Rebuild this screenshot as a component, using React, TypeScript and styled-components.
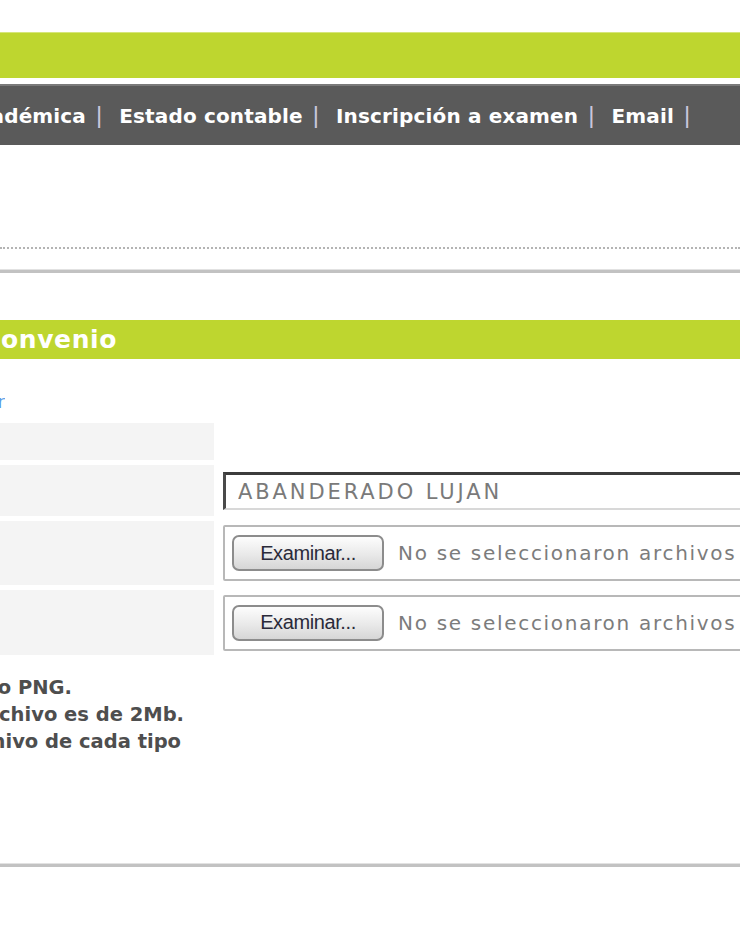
import React from 'react';
import styled, { createGlobalStyle } from 'styled-components';

const GlobalStyle = createGlobalStyle`
	html, body {
		margin: 0;
		padding: 0;
		background: #ffffff;
	}
	body {
		font-family: 'DejaVu Sans', Verdana, sans-serif;
		overflow: hidden;
	}
`;

const Page = styled.div`
	width: 740px;
	height: 940px;
	overflow: hidden;
	padding-top: 32px;
	box-sizing: border-box;
`;

const BrandBar = styled.div`
	height: 46px;
	background: #bed62f;
	border-top: 1px solid #d6e67a;
	box-sizing: border-box;
`;

const NavBar = styled.nav`
	margin-top: 6px;
	height: 61px;
	background: #5a5a5a;
	border-top: 2px solid #7a7a7a;
	box-sizing: border-box;
	display: flex;
	align-items: center;
	overflow: hidden;
	white-space: nowrap;
`;

// keeps only the right end of a text whose start lies left of the page
const Clip = styled.div<{ $w: number }>`
	width: ${(p) => p.$w}px;
	flex-shrink: 0;
	display: flex;
	justify-content: flex-end;
	overflow: hidden;
	white-space: nowrap;

	> span {
		flex-shrink: 0;
	}
`;

const NavLink = styled.a`
	color: #ffffff;
	font-weight: bold;
	font-size: 20px;
	letter-spacing: 0.15px;
	text-decoration: none;
	flex-shrink: 0;
`;

const Sep = styled.span`
	font-family: 'Liberation Sans', Arial, sans-serif;
	font-size: 24px;
	color: #c9c6dc;
	margin: 0 17px 2px 10px;
	flex-shrink: 0;
`;

const DottedRule = styled.div`
	margin-top: 102px;
	border-top: 2px dotted #b4b4b4;
`;

const SolidRule = styled.div<{ $top: number }>`
	margin-top: ${(p) => p.$top}px;
	height: 3px;
	background: #c2c2c2;
	border-top: 1px solid #e2e2e2;
`;

const SectionTitle = styled.h2`
	margin: 47px 0 0;
	height: 39px;
	background: #bed62f;
	display: flex;
	align-items: center;
	color: #ffffff;
	font-size: 25px;
	font-weight: bold;
	letter-spacing: 0.6px;
`;

const BackLine = styled.div`
	margin-top: 34px;
	height: 16px;
	display: flex;
	align-items: center;
`;

const BackLink = styled.a`
	color: #5b9be6;
	font-size: 18px;
	text-decoration: none;
`;

const FormGrid = styled.div`
	margin-top: 14px;
	display: grid;
	grid-template-columns: 214px 1fr;
	column-gap: 9px;
	row-gap: 5px;
`;

const Label = styled.div<{ $h: number }>`
	height: ${(p) => p.$h}px;
	background: #f4f4f4;
`;

const Value = styled.div`
	display: flex;
	align-items: center;
	overflow: hidden;
`;

const TextInput = styled.input`
	width: 560px;
	height: 38px;
	flex-shrink: 0;
	box-sizing: border-box;
	border-top: 3px solid #3c3c3c;
	border-left: 3px solid #4a4a4a;
	border-right: 2px solid #d0d0d0;
	border-bottom: 2px solid #d8d8d8;
	background: #ffffff;
	padding: 2px 0 0 12px;
	font-family: 'DejaVu Sans', Verdana, sans-serif;
	font-size: 21px;
	letter-spacing: 2.9px;
	color: #7a7a7a;
	outline: none;
`;

const FileBox = styled.div`
	width: 560px;
	height: 56px;
	flex-shrink: 0;
	box-sizing: border-box;
	border: 2px solid #b8b8b8;
	border-radius: 2px;
	display: flex;
	align-items: center;
	padding-left: 7px;
	gap: 14px;
`;

const BrowseButton = styled.button`
	width: 152px;
	height: 36px;
	flex-shrink: 0;
	border: 2px solid #8c8c8c;
	border-radius: 7px;
	background: linear-gradient(#fdfdfd, #e9e9e9 55%, #d6d6d6);
	font-family: 'Liberation Sans', Arial, sans-serif;
	font-size: 20px;
	letter-spacing: -0.4px;
	color: #2a2a3a;
	padding: 0;
`;

const FileStatus = styled.span`
	font-family: 'DejaVu Sans', Verdana, sans-serif;
	font-size: 20px;
	letter-spacing: 1.7px;
	color: #7c7c7c;
	white-space: nowrap;
`;

const Notes = styled.div`
	margin-top: 19px;
	color: #4e4e4e;
	font-size: 19.5px;
	font-weight: bold;
	line-height: 27px;
`;

const BottomRule = styled(SolidRule)``;

const navItems = ['Estado contable', 'Inscripción a examen', 'Email'];

const notes: [number, string][] = [
	[72, 'Los archivos deben ser de tipo JPG o PNG.'],
	[184, 'El tamaño máximo de cada archivo es de 2Mb.'],
	[181, 'Sólo se puede adjuntar un archivo de cada tipo'],
];

const App = () => {
	return (
		<Page>
			<GlobalStyle />
			<BrandBar />
			<NavBar>
				<Clip $w={86}>
					<span>
						<NavLink href="#">Situación académica</NavLink>
					</span>
				</Clip>
				<Sep>|</Sep>
				{navItems.map((item) => (
					<React.Fragment key={item}>
						<NavLink href="#">{item}</NavLink>
						<Sep>|</Sep>
					</React.Fragment>
				))}
			</NavBar>

			<DottedRule />
			<SolidRule $top={20} />

			<SectionTitle>
				<Clip $w={117}>
					<span>Solicitud de Convenio</span>
				</Clip>
			</SectionTitle>

			<BackLine>
				<Clip $w={5}>
					<span>
						<BackLink href="#">Volver</BackLink>
					</span>
				</Clip>
			</BackLine>

			<FormGrid>
				<Label $h={37} />
				<Value />

				<Label $h={51} />
				<Value>
					<TextInput defaultValue="ABANDERADO LUJAN" readOnly />
				</Value>

				<Label $h={64} />
				<Value>
					<FileBox>
						<BrowseButton type="button">Examinar...</BrowseButton>
						<FileStatus>No se seleccionaron archivos</FileStatus>
					</FileBox>
				</Value>

				<Label $h={65} />
				<Value>
					<FileBox>
						<BrowseButton type="button">Examinar...</BrowseButton>
						<FileStatus>No se seleccionaron archivos</FileStatus>
					</FileBox>
				</Value>
			</FormGrid>

			<Notes>
				{notes.map(([w, text]) => (
					<Clip key={text} $w={w}>
						<span>{text}</span>
					</Clip>
				))}
			</Notes>

			<BottomRule $top={108} />
		</Page>
	);
};

export default App;
